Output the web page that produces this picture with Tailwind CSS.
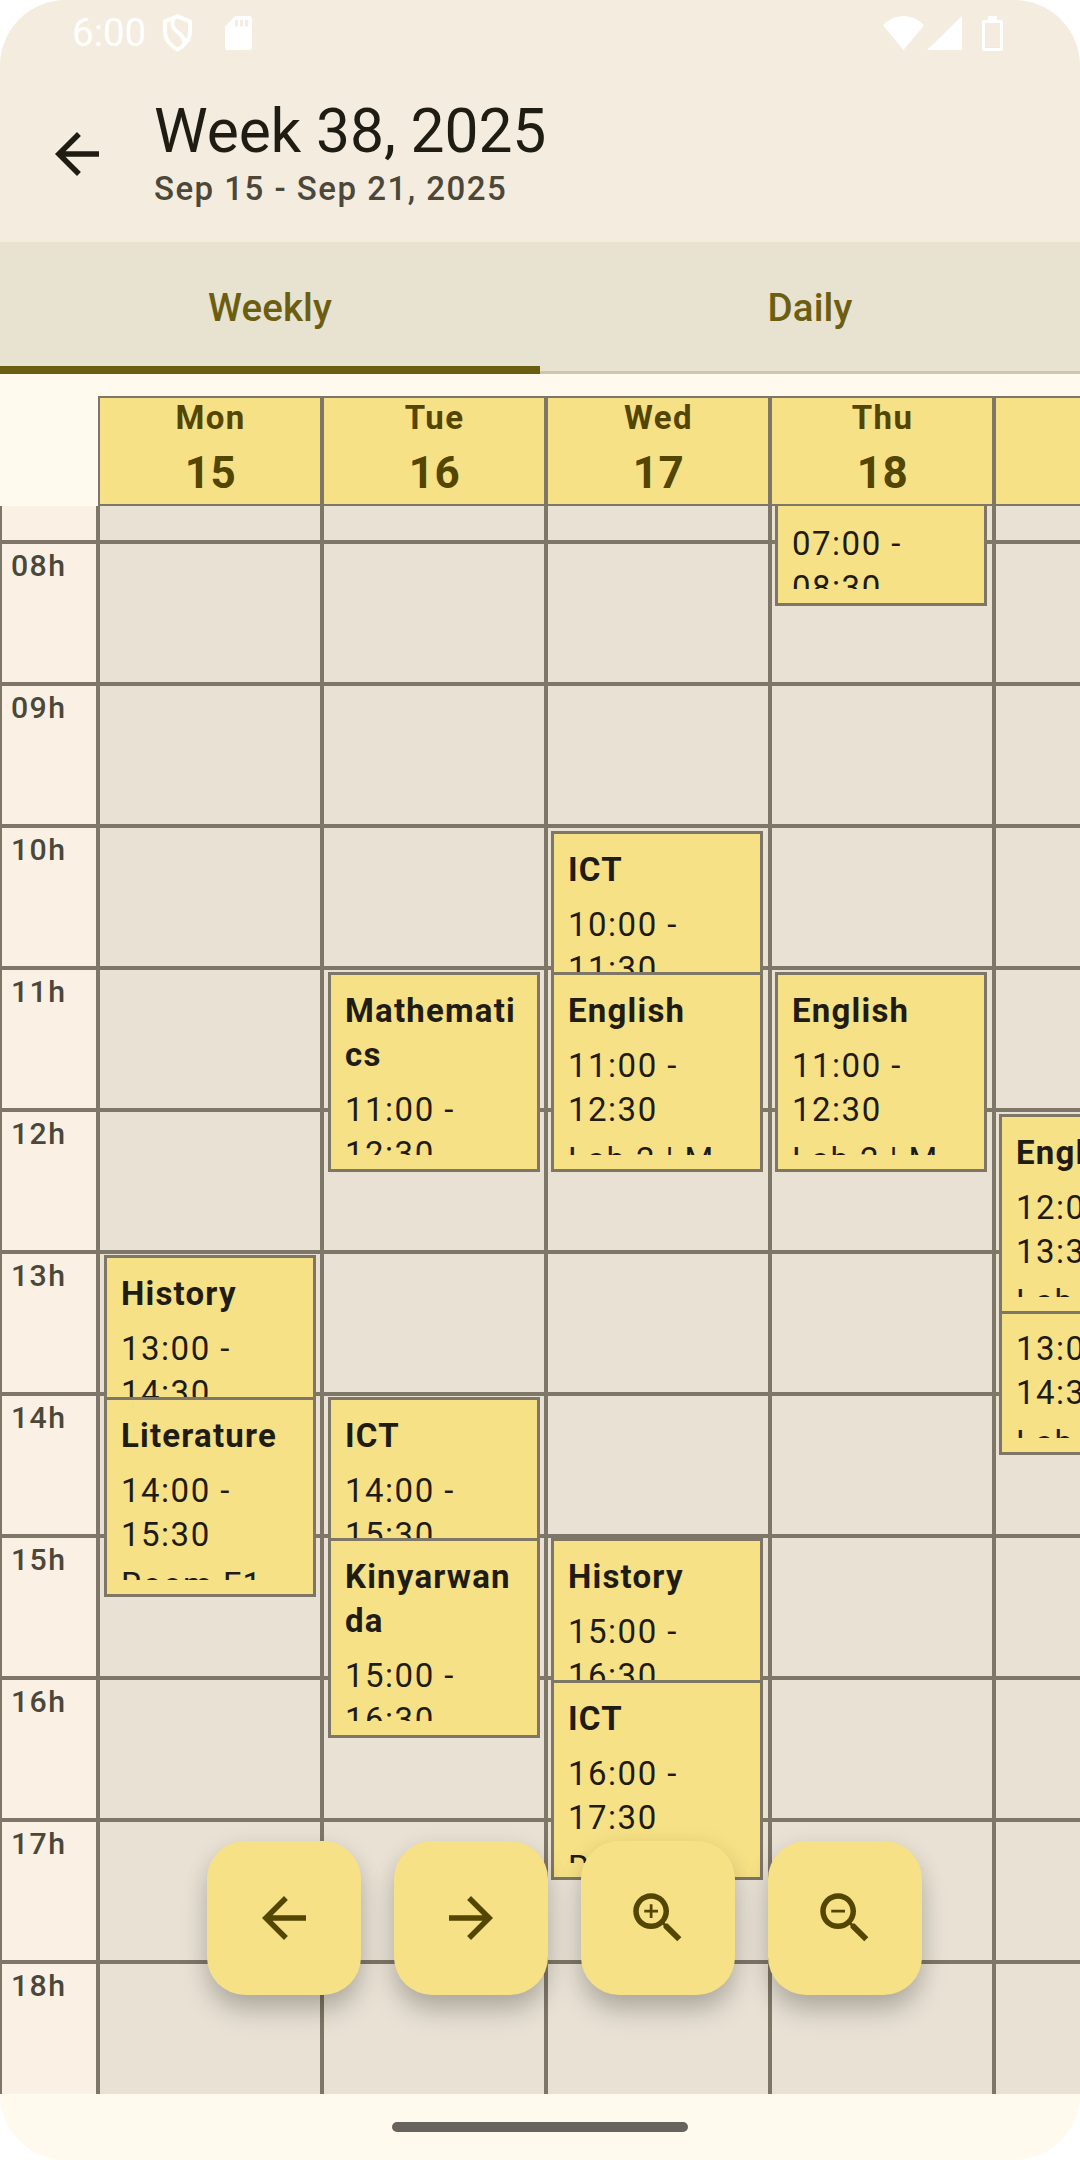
<!DOCTYPE html>
<html lang="en">
<head>
<meta charset="utf-8">
<title>Week 38, 2025</title>
<script src="https://cdn.jsdelivr.net/npm/@tailwindcss/browser@4"></script>
</head>
<body class="bg-white font-[Roboto,sans-serif]">
<div class="relative flex h-[2160px] w-[1080px] flex-col overflow-hidden rounded-[66px] bg-[#fff9ee] text-[#1e1c13]">

  <!-- App bar -->
  <header class="h-[242px] shrink-0 bg-[#f4ecdf]">
    <div class="flex h-[66px] items-center pl-[72px] pr-[77px] text-white">
      <span class="w-[90px] text-[38.5px] leading-[44px]">6:00</span>
      <svg class="h-[38px] w-[31px]" viewBox="0 0 31 38" fill="none" stroke="currentColor" stroke-width="4"><path d="M15.500 2.300L28 7.300V17.500c0 8-5.500 14.500-12.500 18C8.500 32 3 25.500 3 17.500V7.300z" stroke-linejoin="round"/><path d="M11.500 4.500c-2.500 6-1 9.500 4 13.500 6 4.500 8.500 9 5.500 13.500"/></svg>
      <svg class="ml-[32px] h-[34px] w-[27px]" viewBox="0 0 27 34"><path fill="currentColor" fill-rule="evenodd" d="M10.500 0H24a3 3 0 0 1 3 3v28a3 3 0 0 1-3 3H3a3 3 0 0 1-3-3V10.500zM10 4v6.500h3V4zm5 0v6.500h3V4zm5 0v6.500h3.300V4z"/></svg>
      <svg class="ml-auto h-[34px] w-[41px]" viewBox="0 0 42 34" preserveAspectRatio="none"><path fill="currentColor" d="M0 9.500C5.500 3.500 13 0 21 0s15.500 3.500 21 9.500L21 34z"/></svg>
      <svg class="ml-[3px] h-[34px] w-[35px]" viewBox="0 0 35 34"><path fill="currentColor" d="M35 0v34H0z"/></svg>
      <svg class="ml-[20px] h-[35px] w-[21px]" viewBox="0 0 21 35"><path fill="currentColor" fill-rule="evenodd" d="M6 0h9v4h4a2 2 0 0 1 2 2v27a2 2 0 0 1-2 2H2a2 2 0 0 1-2-2V6a2 2 0 0 1 2-2h4zM3 7v25h15V7z"/><path fill="#fbe3d5" d="M4 31h13v1H4z"/></svg>
    </div>
    <div class="flex pl-[44px] pt-[27px]">
      <svg class="mt-[28px] size-[66px]" viewBox="0 0 24 24" fill="currentColor"><path d="M20 11H7.830l5.590-5.590L12 4l-8 8 8 8 1.410-1.410L7.830 13H20v-2z"/></svg>
      <div class="ml-[44px] flex flex-col">
        <h1 class="h-[74px] text-[60.5px] leading-[77px] tracking-[-0.1px]">Week 38, 2025</h1>
        <p class="text-[33px] leading-[44px] font-medium tracking-[1.48px] text-[#4b4739]">Sep 15 - Sep 21, 2025</p>
      </div>
    </div>
  </header>

  <!-- Tabs -->
  <nav class="grid h-[132px] shrink-0 grid-cols-2 bg-[#e8e2d0] text-[38.5px] leading-[55px] font-medium tracking-[0.1px] text-[#6c5e10]">
    <a class="flex items-center justify-center border-b-8 border-[#6c5e10] pt-[6px]">Weekly</a>
    <a class="flex items-center justify-center border-b-3 border-[#cdc6b4] pt-px">Daily</a>
  </nav>

  <!-- Day headers -->
  <div id="days" class="mt-[22px] flex h-[110px] shrink-0 pl-[98px]"></div>

  <!-- Timetable, scrolled to just before 08h -->
  <main class="h-[1588px] shrink-0 overflow-hidden">
    <div class="-mt-[106px] flex">
      <div id="hours" class="w-[98px] shrink-0"></div>
      <div id="columns" class="flex"></div>
    </div>
  </main>

  <!-- Gesture bar -->
  <footer class="flex justify-center pt-[28px]"><div class="h-[10px] w-[296px] rounded-full bg-[#66645c]"></div></footer>

  <!-- Floating actions -->
  <div id="fabs" class="absolute top-[1841px] left-[207px] flex gap-[33px] text-[#534600]"></div>
</div>

<script>
const days = [['Mon', 15], ['Tue', 16], ['Wed', 17], ['Thu', 18], ['Fri', 19]];
const hours = ['07', '08', '09', '10', '11', '12', '13', '14', '15', '16', '17', '18'];
const lessons = [
  [['History', 13, 'Room F1'], ['Literature', 14, 'Room F1']],
  [['Mathemati<wbr>cs', 11, 'Lab 2'], ['ICT', 14, 'Room F1'], ['Kinyarwan<wbr>da', 15, 'Room F1']],
  [['ICT', 10, 'Lab 2'], ['English', 11, 'Lab 2 | M'], ['History', 15, 'Room F1'], ['ICT', 16, 'Room F1']],
  [['Mathemati<wbr>cs', 7, 'Room F1'], ['English', 11, 'Lab 2 | M']],
  [['English', 13, 'Lab 2 | M'], ['English', 12, 'Lab 2 | M']],
];
const pad = n => String(n).padStart(2, '0');

document.getElementById('days').innerHTML = days.map(([name, date], i) => `
  <div class="w-[224px] shrink-0 border-2 border-[#7e7767] bg-[#f7e186] pl-px text-center font-bold text-[#534600]">
    <div class="-mt-[2px] text-[33px] leading-[44px] tracking-[1.375px]">${i < 4 ? name : ''}</div>
    <div class="text-[44px] leading-[66px] tracking-[0.41px]">${i < 4 ? date : ''}</div>
  </div>`).join('');

document.getElementById('hours').innerHTML = hours.map(h => `
  <div class="h-[142px] border-2 border-[#7e7767] bg-[#faf1e4] pl-[9px] text-[30.25px] leading-[44px] font-medium tracking-[1.375px] text-[#4b4739]">${h}h</div>`).join('');

document.getElementById('columns').innerHTML = lessons.map((list, i) => `
  <div class="relative w-[224px] shrink-0">
    ${hours.map(() => '<div class="h-[142px] border-2 border-[#7e7767] bg-[#e8e1d4]"></div>').join('')}
    ${list.map(([name, start, room]) => `
    <div class="absolute h-[200px] w-[212px] border-3 border-[#7e7767] bg-[#f7e186] p-[14px] text-[33px] leading-[44px]" style="left:${i < 2 ? 6 : 5}px;top:${Math.floor(6.5 + (start - 7) * 141.5)}px">
      <div class="h-full overflow-hidden">
        <div class="font-bold tracking-[1.2px]">${name}</div>
        <div class="mt-[11px] tracking-[1.5px]">${pad(start)}:00 - ${pad(start + 1)}:30</div>
        <div class="mt-[6px] whitespace-nowrap tracking-[1.375px]">${room}</div>
      </div>
    </div>`).join('')}
  </div>`).join('');

const lens = 'M15.500 14h-.79l-.28-.27C15.410 12.590 16 11.110 16 9.500 16 5.910 13.090 3 9.500 3S3 5.910 3 9.500 5.910 16 9.500 16c1.610 0 3.090-.59 4.230-1.570l.27.28v.79l5 4.990L20.490 19l-4.990-5zm-6 0C7.010 14 5 11.990 5 9.500S7.010 5 9.500 5 14 7.010 14 9.500 11.990 14 9.500 14z';
const icons = [
  'M20 11H7.830l5.590-5.590L12 4l-8 8 8 8 1.410-1.410L7.830 13H20v-2z',
  'M12 4l-1.410 1.410L16.170 11H4v2h12.170l-5.580 5.590L12 20l8-8z',
  lens + 'M12 10h-2v2H9v-2H7V9h2V7h1v2h2v1z',
  lens + 'M7 9h5v1H7z',
];
document.getElementById('fabs').innerHTML = icons.map(d => `
  <button class="flex size-[154px] items-center justify-center rounded-[38px] bg-[#f7e186] shadow-[0_18px_28px_-3px_rgba(0,0,0,0.22),0_4px_24px_rgba(0,0,0,0.08)]">
    <svg class="size-[66px]" viewBox="0 0 24 24" fill="currentColor"><path d="${d}"/></svg>
  </button>`).join('');
</script>
</body>
</html>
